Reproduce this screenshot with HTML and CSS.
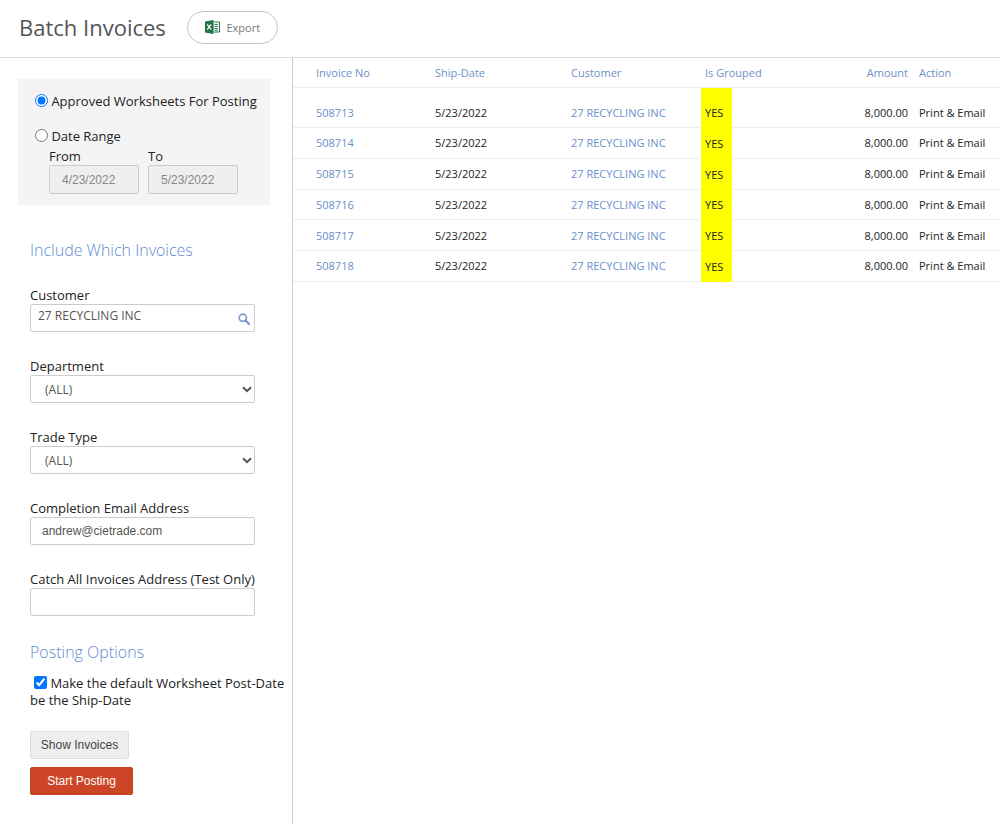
FILE: index.html
```html
<!DOCTYPE html>
<html lang="en">
<head>
    <meta charset="UTF-8">
    <meta name="viewport" content="width=device-width, initial-scale=1.0">
    <title>Batch Invoices</title>
    <link rel="stylesheet" href="styles.css">
</head>
<body>
    <header class="page-header">
        <h1>Batch Invoices</h1>
        <button type="button" class="export-btn">
            <svg class="excel-icon" width="15" height="14" viewBox="0 0 15 14">
                <path d="M0 1.6 8.6 0v14L0 12.4z" fill="#217346"/>
                <path d="M9.3 2h5.2v10H9.3" fill="none" stroke="#217346" stroke-width="1"/>
                <path d="M9.5 4.4h3.4M9.5 6.4h3.4M9.5 8.4h3.4M9.5 10.2h3.4" stroke="#217346" stroke-width="1"/>
                <path d="M2.2 4.4 6.2 9.6M6.2 4.4 2.2 9.6" stroke="#fff" stroke-width="1.2"/>
            </svg>
            Export
        </button>
    </header>
    <div class="page-body">
        <aside class="sidebar">
            <div class="range-panel">
                <label class="radio-row radio-first"><input type="radio" name="range" checked> Approved Worksheets For Posting</label>
                <label class="radio-row radio-second"><input type="radio" name="range"> Date Range</label>
                <div class="date-fields">
                    <div class="date-field">
                        <label for="fromDate">From</label>
                        <input type="text" id="fromDate" value="4/23/2022" disabled>
                    </div>
                    <div class="date-field">
                        <label for="toDate">To</label>
                        <input type="text" id="toDate" value="5/23/2022" disabled>
                    </div>
                </div>
            </div>

            <h2 class="section-title include-title">Include Which Invoices</h2>

            <div class="form-group">
                <label for="customer">Customer</label>
                <div class="input-wrap">
                    <input type="text" id="customer" class="customer-input" value="27 RECYCLING INC">
                    <svg class="search-icon" width="12" height="12" viewBox="0 0 12 12">
                        <circle cx="4.8" cy="4.8" r="3.6" fill="none" stroke="#7d9cc9" stroke-width="1.7"/>
                        <path d="M7.6 7.6 11 11" stroke="#7d9cc9" stroke-width="2.2" stroke-linecap="round"/>
                    </svg>
                </div>
            </div>
            <div class="form-group">
                <label for="department">Department</label>
                <div class="input-wrap">
                    <select id="department"><option>(ALL)</option></select>
                    <svg class="chevron" width="10" height="7" viewBox="0 0 10 7"><path d="M1 1.2 5 5.2 9 1.2" fill="none" stroke="#555" stroke-width="2"/></svg>
                </div>
            </div>
            <div class="form-group">
                <label for="tradeType">Trade Type</label>
                <div class="input-wrap">
                    <select id="tradeType"><option>(ALL)</option></select>
                    <svg class="chevron" width="10" height="7" viewBox="0 0 10 7"><path d="M1 1.2 5 5.2 9 1.2" fill="none" stroke="#555" stroke-width="2"/></svg>
                </div>
            </div>
            <div class="form-group">
                <label for="email">Completion Email Address</label>
                <input type="text" id="email" class="email-input" value="andrew@cietrade.com">
            </div>
            <div class="form-group">
                <label for="catchAll">Catch All Invoices Address (Test Only)</label>
                <input type="text" id="catchAll">
            </div>

            <h2 class="section-title posting-title">Posting Options</h2>
            <label class="check-row"><input type="checkbox" checked> Make the default Worksheet Post-Date be the Ship-Date</label>

            <button type="button" class="btn show-btn">Show Invoices</button>
            <button type="button" class="btn start-btn">Start Posting</button>
        </aside>

        <main class="invoices">
            <table class="invoice-table">
                <colgroup>
                    <col class="col-invoice">
                    <col class="col-date">
                    <col class="col-customer">
                    <col class="col-grouped">
                    <col class="col-amount">
                    <col>
                </colgroup>
                <thead>
                    <tr>
                        <th class="first">Invoice No</th>
                        <th>Ship-Date</th>
                        <th>Customer</th>
                        <th>Is Grouped</th>
                        <th class="num">Amount</th>
                        <th>Action</th>
                    </tr>
                </thead>
                <tbody>
                    <tr>
                        <td class="first link">508713</td>
                        <td>5/23/2022</td>
                        <td class="link">27 RECYCLING INC</td>
                        <td class="flag">YES</td>
                        <td class="num">8,000.00</td>
                        <td>Print &amp; Email</td>
                    </tr>
                    <tr>
                        <td class="first link">508714</td>
                        <td>5/23/2022</td>
                        <td class="link">27 RECYCLING INC</td>
                        <td class="flag">YES</td>
                        <td class="num">8,000.00</td>
                        <td>Print &amp; Email</td>
                    </tr>
                    <tr>
                        <td class="first link">508715</td>
                        <td>5/23/2022</td>
                        <td class="link">27 RECYCLING INC</td>
                        <td class="flag">YES</td>
                        <td class="num">8,000.00</td>
                        <td>Print &amp; Email</td>
                    </tr>
                    <tr>
                        <td class="first link">508716</td>
                        <td>5/23/2022</td>
                        <td class="link">27 RECYCLING INC</td>
                        <td class="flag">YES</td>
                        <td class="num">8,000.00</td>
                        <td>Print &amp; Email</td>
                    </tr>
                    <tr>
                        <td class="first link">508717</td>
                        <td>5/23/2022</td>
                        <td class="link">27 RECYCLING INC</td>
                        <td class="flag">YES</td>
                        <td class="num">8,000.00</td>
                        <td>Print &amp; Email</td>
                    </tr>
                    <tr>
                        <td class="first link">508718</td>
                        <td>5/23/2022</td>
                        <td class="link">27 RECYCLING INC</td>
                        <td class="flag">YES</td>
                        <td class="num">8,000.00</td>
                        <td>Print &amp; Email</td>
                    </tr>
                </tbody>
            </table>
        </main>
    </div>
</body>
</html>
```

FILE: styles.css
```css
* {
    box-sizing: border-box;
}
html, body {
    height: 100%;
}
body {
    margin: 0;
    display: flex;
    flex-direction: column;
    overflow: hidden;
    background: #fff;
    color: #222;
    font-family: "Open Sans", sans-serif;
    font-size: 13px;
}
.page-header {
    height: 58px;
    flex: none;
    display: flex;
    align-items: center;
    padding: 0 0 3px 19px;
    border-bottom: 1px solid #ddd;
}
.page-header h1 {
    margin: 0 21px 0 0;
    font-size: 22px;
    font-weight: 400;
    color: #555;
}
.export-btn {
    width: 91px;
    height: 33px;
    display: flex;
    align-items: center;
    justify-content: center;
    gap: 7px;
    padding: 0;
    background: #fff;
    border: 1px solid #bcc5cc;
    border-radius: 17px;
    color: #777;
    font-family: "Open Sans", sans-serif;
    font-size: 11px;
}
.page-body {
    flex: 1;
    display: flex;
    min-height: 0;
}
.sidebar {
    width: 293px;
    flex: none;
    padding: 21px 0 0 30px;
    border-right: 1px solid #ccc;
}
.range-panel {
    width: 252px;
    height: 126px;
    margin-left: -12px;
    padding: 13px 0 0 17px;
    background: #f4f4f4;
}
.radio-row {
    display: block;
    line-height: 18px;
}
.radio-row input {
    margin: 0 0 0 0;
    vertical-align: -1px;
}
.radio-second {
    margin-top: 17px;
}
.date-fields {
    display: flex;
    gap: 9px;
    margin-top: 2px;
    padding-left: 14px;
}
.date-field label {
    display: block;
    line-height: 18px;
}
.date-field input {
    width: 90px;
    height: 29px;
    padding: 0 0 0 12px;
    border: 1px solid #ccc;
    border-radius: 2px;
    background: #efefef;
    color: #888;
    font-family: "Liberation Sans", sans-serif;
    font-size: 12px;
}
.section-title {
    margin: 0;
    font-size: 16px;
    font-weight: 300;
    line-height: 22px;
    color: #5f8bd0;
}
.include-title {
    margin-top: 34px;
    margin-bottom: 25px;
}
.posting-title {
    margin-top: 1px;
}
.form-group {
    margin-bottom: 25px;
}
.form-group label {
    display: block;
    line-height: 18px;
}
.input-wrap {
    position: relative;
    width: 225px;
}
.form-group input,
.form-group select {
    display: block;
    width: 225px;
    height: 28px;
    border: 1px solid #ccc;
    border-radius: 2px;
    background: #fff;
    color: #555;
    font-size: 12px;
}
.customer-input {
    padding: 0 0 5px 7px;
    font-family: "Open Sans", sans-serif;
}
.form-group select {
    appearance: none;
    padding: 0 0 0 14px;
    font-family: "Open Sans", sans-serif;
}
.email-input {
    padding: 0 0 0 11px;
    font-family: "Liberation Sans", sans-serif;
}
.search-icon {
    position: absolute;
    right: 5px;
    top: 9px;
}
.chevron {
    position: absolute;
    right: 3px;
    top: 11px;
}
.check-row {
    display: block;
    margin-top: 12px;
    line-height: 17px;
}
.check-row input {
    margin: 0 0 0 4px;
    vertical-align: -1px;
}
.btn {
    display: block;
    height: 28px;
    padding: 0;
    border-radius: 2px;
    font-family: "Liberation Sans", sans-serif;
    font-size: 12px;
}
.show-btn {
    width: 99px;
    margin-top: 22px;
    background: #eee;
    border: 1px solid #ddd;
    color: #444;
}
.start-btn {
    width: 103px;
    margin-top: 8px;
    background: #cc4526;
    border: 1px solid #c44122;
    color: #fff;
}
.invoices {
    flex: 1;
    min-width: 0;
}
.invoice-table {
    width: 708px;
    table-layout: fixed;
    border-collapse: separate;
    border-spacing: 0;
    font-size: 11px;
}
.col-invoice {
    width: 138px;
}
.col-date {
    width: 136px;
}
.col-customer {
    width: 134px;
}
.col-grouped {
    width: 31px;
}
.col-amount {
    width: 183px;
}
.invoice-table th {
    height: 30px;
    padding: 0 4px;
    border-bottom: 1px solid #eee;
    color: #6f8fc9;
    font-weight: 400;
    text-align: left;
    white-space: nowrap;
}
.invoice-table td {
    height: 30.75px;
    padding: 0 4px;
    border-bottom: 1px solid #eee;
    color: #222;
    white-space: nowrap;
}
.invoice-table tbody tr:first-child td {
    height: 40px;
    padding-top: 9px;
}
.invoice-table .first {
    padding-left: 23px;
}
.invoice-table .num {
    padding-right: 7px;
    text-align: right;
}
.invoice-table .link {
    color: #6a8fc9;
}
.invoice-table .flag {
    background: #ffff00;
    border-bottom: none;
}
```
